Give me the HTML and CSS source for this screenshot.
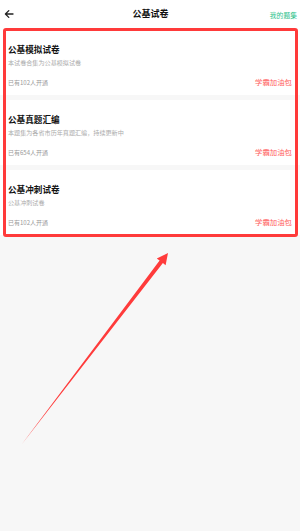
FILE: index.html
```html
<!DOCTYPE html>
<html lang="zh">
<head>
<meta charset="utf-8">
<link rel="stylesheet" href="styles.css">
</head>
<body>
<div class="page">
  <header class="topbar">
    <svg class="back" width="10" height="10" viewBox="0 0 10 10"><path d="M9 5H1.5M4.8 1.6 1.4 5l3.4 3.4" fill="none" stroke="#222" stroke-width="1.3" stroke-linecap="round" stroke-linejoin="round"/></svg>
    <div class="title">公基试卷</div>
    <div class="mine">我的题集</div>
  </header>
  <main class="list">
    <section class="card">
      <div class="card-title">公基模拟试卷</div>
      <div class="card-desc">本试卷合集为公基模拟试卷</div>
      <div class="card-foot"><span class="count">已有102人开通</span><span class="badge">学霸加油包</span></div>
    </section>
    <section class="card">
      <div class="card-title">公基真题汇编</div>
      <div class="card-desc">本题集为各省市历年真题汇编，持续更新中</div>
      <div class="card-foot"><span class="count">已有654人开通</span><span class="badge">学霸加油包</span></div>
    </section>
    <section class="card">
      <div class="card-title">公基冲刺试卷</div>
      <div class="card-desc">公基冲刺试卷</div>
      <div class="card-foot"><span class="count">已有102人开通</span><span class="badge">学霸加油包</span></div>
    </section>
  </main>
  <div class="highlight"></div>
  <svg class="arrow" width="300" height="531" viewBox="0 0 300 531">
    <polygon points="168,253 165.6,265.2 162.9,263.1 22,444 159.6,260.4 156.8,258.6" fill="#ff3b3b"/>
  </svg>
</div>
</body>
</html>
```
FILE: styles.css
```css
html, body {
  margin: 0;
  padding: 0;
  background: #f7f7f7;
}
body {
  font-family: "Noto Sans CJK SC", "Noto Sans", sans-serif;
  color: #111;
}
.page {
  position: relative;
  width: 300px;
  height: 531px;
  overflow: hidden;
}
.topbar {
  height: 30px;
  background: #fff;
  display: grid;
  grid-template-columns: 1fr auto 1fr;
  align-items: center;
  padding: 0 3px 0 4px;
  box-sizing: border-box;
}
.back {
  display: block;
  margin-top: -3px;
}
.title {
  font-size: 9px;
  font-weight: 700;
  line-height: 10px;
  margin-top: -3px;
}
.mine {
  justify-self: end;
  font-size: 6.8px;
  color: #2cc28c;
  line-height: 8px;
  margin-top: -1px;
}
.list {
  display: flex;
  flex-direction: column;
  gap: 5px;
}
.card {
  background: #fff;
  height: 65px;
  box-sizing: border-box;
  padding: 13px 8px 0 8px;
  display: flex;
  flex-direction: column;
}
.card-title {
  font-size: 8.6px;
  font-weight: 700;
  line-height: 12px;
}
.card-desc {
  font-size: 6.1px;
  line-height: 8px;
  color: #aaa;
  margin-top: 4px;
}
.card-foot {
  margin-top: 10px;
  display: flex;
  justify-content: space-between;
  align-items: center;
  height: 10px;
}
.count {
  font-size: 6px;
  color: #999;
  line-height: 8px;
  margin-top: 2px;
}
.badge {
  font-size: 7.4px;
  color: #ff5c5c;
  line-height: 9px;
  margin-top: -2px;
}
.highlight {
  position: absolute;
  left: 3px;
  top: 28px;
  width: 295px;
  height: 209px;
  box-sizing: border-box;
  border: 3px solid #ff3a3a;
  border-radius: 3px;
}
.arrow {
  position: absolute;
  left: 0;
  top: 0;
}
```
